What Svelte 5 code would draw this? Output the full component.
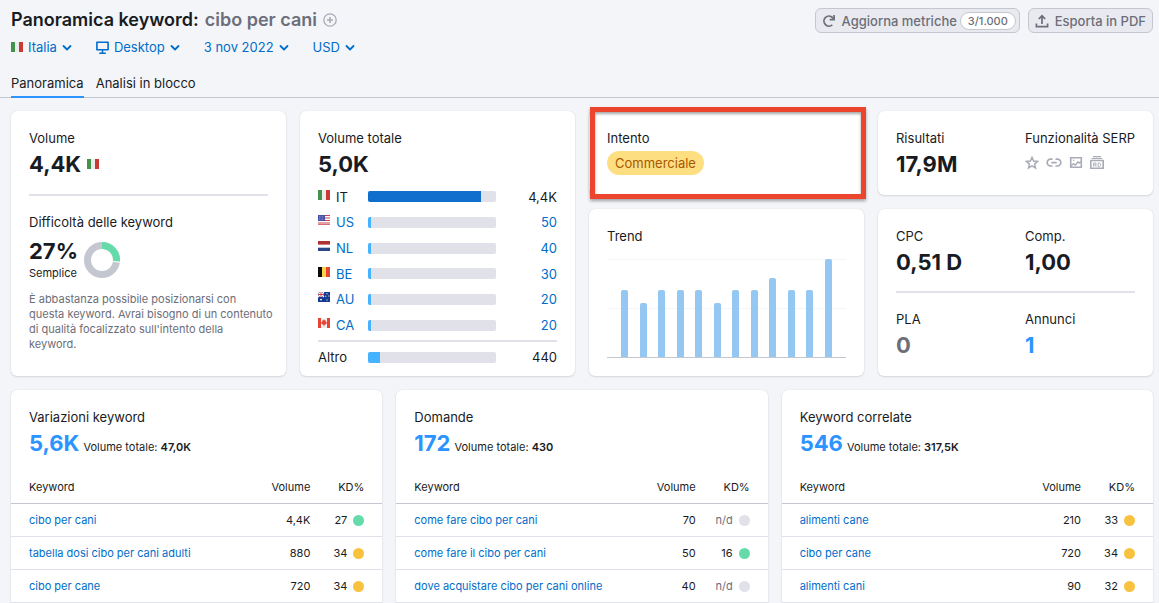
<script lang="ts">
	interface Row {
		keyword: string;
		volume: string;
		kd: string;
		level: 'easy' | 'medium' | 'none';
	}

	interface KeywordList {
		title: string;
		count: string;
		total: string;
		rows: Row[];
	}

	const filters = [
		{ label: 'Italia', icon: 'flag' },
		{ label: 'Desktop', icon: 'desktop' },
		{ label: '3 nov 2022', icon: null },
		{ label: 'USD', icon: null }
	];

	// share is a percentage of the track
	const countries = [
		{ code: 'IT', volume: '4,4K', share: 88 },
		{ code: 'US', volume: '50', share: 2 },
		{ code: 'NL', volume: '40', share: 2 },
		{ code: 'BE', volume: '30', share: 2 },
		{ code: 'AU', volume: '20', share: 2 },
		{ code: 'CA', volume: '20', share: 2 }
	];

	const trend = [68, 55, 68, 68, 68, 55, 68, 68, 81, 68, 68, 100];

	const lists: KeywordList[] = [
		{
			title: 'Variazioni keyword',
			count: '5,6K',
			total: '47,0K',
			rows: [
				{ keyword: 'cibo per cani', volume: '4,4K', kd: '27', level: 'easy' },
				{ keyword: 'tabella dosi cibo per cani adulti', volume: '880', kd: '34', level: 'medium' },
				{ keyword: 'cibo per cane', volume: '720', kd: '34', level: 'medium' }
			]
		},
		{
			title: 'Domande',
			count: '172',
			total: '430',
			rows: [
				{ keyword: 'come fare cibo per cani', volume: '70', kd: 'n/d', level: 'none' },
				{ keyword: 'come fare il cibo per cani', volume: '50', kd: '16', level: 'easy' },
				{ keyword: 'dove acquistare cibo per cani online', volume: '40', kd: 'n/d', level: 'none' }
			]
		},
		{
			title: 'Keyword correlate',
			count: '546',
			total: '317,5K',
			rows: [
				{ keyword: 'alimenti cane', volume: '210', kd: '33', level: 'medium' },
				{ keyword: 'cibo per cane', volume: '720', kd: '34', level: 'medium' },
				{ keyword: 'alimenti cani', volume: '90', kd: '32', level: 'medium' }
			]
		}
	];
</script>

{#snippet flag(code: string)}
	<svg class="flag" viewBox="0 0 12 10" width="12" height="10" aria-hidden="true">
		{#if code === 'IT'}
			<rect width="12" height="10" fill="#ececec" />
			<rect width="4" height="10" fill="#43934b" />
			<rect x="8" width="4" height="10" fill="#c93a32" />
		{:else if code === 'US'}
			<rect width="12" height="10" fill="#fff" />
			<path d="M0 .5h12M0 3h12M0 5.5h12M0 8h12M0 9.7h12" stroke="#cf3f4c" stroke-width="1.1" />
			<rect width="7" height="6" fill="#4a4fa8" />
			<path d="M1 1.5h5M1 3h5M1 4.5h5" stroke="#a9abdc" stroke-width=".6" stroke-dasharray=".8 .8" />
		{:else if code === 'NL'}
			<rect width="12" height="10" fill="#fff" />
			<rect width="12" height="3.6" fill="#ad3130" />
			<rect y="6.7" width="12" height="3.3" fill="#28478c" />
		{:else if code === 'BE'}
			<rect width="12" height="10" fill="#fad646" />
			<rect width="4" height="10" fill="#0b0b0b" />
			<rect x="8" width="4" height="10" fill="#ea4438" />
		{:else if code === 'AU'}
			<rect width="12" height="10" fill="#173a91" />
			<path d="M0 0l6 5M6 0L0 5" stroke="#fff" stroke-width="1.1" />
			<path d="M3 0v5M0 2.5h6" stroke="#fff" stroke-width="2" />
			<path d="M3 0v5M0 2.5h6" stroke="#dc3a48" stroke-width="1" />
			<circle cx="3" cy="7.6" r=".9" fill="#fff" />
			<path d="M9 1.3v1M7.3 4.3h1M10.3 4h1M9 7.5v1" stroke="#fff" stroke-width="1" />
		{:else if code === 'CA'}
			<rect width="12" height="10" fill="#f1f1f1" />
			<rect width="3" height="10" fill="#e64535" />
			<rect x="9" width="3" height="10" fill="#e64535" />
			<path d="M6 1.2l.9 1.4.9-.3-.1 1.4 1.2.2-.5 1 .4.5-2.2 1.6H6.3v1.6h-.6V7h-.3L3.2 5.4l.4-.5-.5-1 1.2-.2-.1-1.4.9.3z" fill="#e64535" />
		{/if}
	</svg>
{/snippet}

{#snippet chevron()}
	<svg class="chevron" viewBox="0 0 10 10" width="10" height="10" aria-hidden="true">
		<path d="M1.5 4l3.5 3.5L8.5 4" fill="none" stroke="currentColor" stroke-width="1.8" stroke-linecap="round" stroke-linejoin="round" />
	</svg>
{/snippet}

<div class="page">
	<header class="header">
		<div>
			<h1 class="title">
				Panoramica keyword: <span class="query">cibo per cani</span>
				<button type="button" class="add" aria-label="Aggiungi keyword">
					<svg viewBox="0 0 14 14" width="14" height="14" aria-hidden="true">
						<circle cx="7" cy="7" r="6.2" fill="none" stroke="currentColor" stroke-width="1.3" />
						<path d="M7 4v6M4 7h6" stroke="currentColor" stroke-width="1.6" />
					</svg>
				</button>
			</h1>
			<div class="filters">
				{#each filters as filter}
					<button type="button" class="filter">
						{#if filter.icon === 'flag'}
							{@render flag('IT')}
						{:else if filter.icon === 'desktop'}
							<svg viewBox="0 0 13 13" width="13" height="13" aria-hidden="true">
								<path d="M.9 1.2h11.2v7.6H.9z" fill="none" stroke="currentColor" stroke-width="1.6" stroke-linejoin="round" />
								<path d="M6.5 9v3M3.2 12.2h6.6" stroke="currentColor" stroke-width="1.5" />
							</svg>
						{/if}
						<span>{filter.label}</span>
						{@render chevron()}
					</button>
				{/each}
			</div>
		</div>
		<div class="actions">
			<button type="button" class="action">
				<svg viewBox="0 0 14 14" width="14" height="14" aria-hidden="true">
					<path d="M10.3 10.8A5 5 0 1 1 10.6 3.6L12 5" fill="none" stroke="currentColor" stroke-width="1.8" />
					<path d="M12.1 1v4.6H7.6" fill="none" stroke="currentColor" stroke-width="1.7" />
				</svg>
				Aggiorna metriche
				<span class="quota">3/1.000</span>
			</button>
			<button type="button" class="action">
				<svg viewBox="0 0 14 14" width="14" height="14" aria-hidden="true">
					<path d="M7 10V2M3.8 5L7 1.8 10.2 5" fill="none" stroke="currentColor" stroke-width="1.7" />
					<path d="M1.4 9.4v3.2h11.2V9.4" fill="none" stroke="currentColor" stroke-width="1.7" />
				</svg>
				Esporta in PDF
			</button>
		</div>
	</header>

	<nav class="tabs">
		<a href="#panoramica" class="tab active">Panoramica</a>
		<a href="#analisi" class="tab">Analisi in blocco</a>
	</nav>

	<main>
		<div class="summary">
			<section class="card">
				<h2 class="label">Volume</h2>
				<div class="value">4,4K {@render flag('IT')}</div>
				<hr />
				<h2 class="label">Difficoltà delle keyword</h2>
				<div class="difficulty">
					<div>
						<div class="value">27%</div>
						<div class="level">Semplice</div>
					</div>
					<svg viewBox="0 0 36 36" width="36" height="36" aria-hidden="true">
						<circle cx="18" cy="18" r="14.5" fill="none" stroke="#c4c7cf" stroke-width="7" />
						<path d="M18 3.5A14.5 14.5 0 0 1 32.4 20.2" fill="none" stroke="#fff" stroke-width="7" />
						<path d="M18 3.5A14.5 14.5 0 0 1 32.5 19.3" fill="none" stroke="#66dbaa" stroke-width="7" />
					</svg>
				</div>
				<p class="hint">
					È abbastanza possibile posizionarsi con<br />
					questa keyword. Avrai bisogno di un contenuto<br />
					di qualità focalizzato sull'intento della<br />
					keyword.
				</p>
			</section>

			<section class="card totals">
				<h2 class="label">Volume totale</h2>
				<div class="value">5,0K</div>
				<div class="countries">
					{#each countries as country, i}
						<div class="country">
							{@render flag(country.code)}
							{#if i === 0}
								<span>{country.code}</span>
							{:else}
								<a href="#{country.code}">{country.code}</a>
							{/if}
							<div class="track">
								<div class="fill" class:main={i === 0} style="width: {country.share}%"></div>
							</div>
							{#if i === 0}
								<span class="amount">{country.volume}</span>
							{:else}
								<a class="amount" href="#{country.code}">{country.volume}</a>
							{/if}
						</div>
					{/each}
				</div>
				<div class="country other">
					<span class="wide">Altro</span>
					<div class="track"><div class="fill" style="width: 9%"></div></div>
					<span class="amount">440</span>
				</div>
			</section>

			<div class="stack">
				<section class="card highlighted">
					<h2 class="label">Intento</h2>
					<span class="intent">Commerciale</span>
				</section>
				<section class="card trend">
					<h2 class="label">Trend</h2>
					<div class="chart">
						{#each trend as height}
							<div class="bar" style="height: {height}%"></div>
						{/each}
					</div>
				</section>
			</div>

			<div class="stack">
				<section class="card pair">
					<div>
						<h2 class="label">Risultati</h2>
						<div class="value">17,9M</div>
					</div>
					<div>
						<h2 class="label">Funzionalità SERP</h2>
						<div class="features">
							<svg viewBox="0 0 14 14" width="14" height="14" aria-hidden="true">
								<path d="M7 1.4l1.6 3.7 4 .3-3 2.7.9 3.9L7 9.9 3.5 12l.9-3.9-3-2.7 4-.3z" fill="none" stroke="currentColor" stroke-width="1.5" />
							</svg>
							<svg viewBox="0 0 16 14" width="16" height="14" aria-hidden="true">
								<path d="M6.5 3.2H4.6a3.4 3.4 0 0 0 0 6.8h1.9M9.5 3.2h1.9a3.4 3.4 0 0 1 0 6.8H9.5M5.3 6.6h5.4" fill="none" stroke="currentColor" stroke-width="1.7" />
							</svg>
							<svg viewBox="0 0 14 14" width="14" height="14" aria-hidden="true">
								<path d="M1.7 1.7h10.6v9.6H1.7z" fill="none" stroke="currentColor" stroke-width="1.6" />
								<path d="M2 10l2.5-2.4 1.8 1.7L9 5.8l1.2 1.2L12 5.5" fill="none" stroke="currentColor" stroke-width="1.4" />
								<circle cx="4.6" cy="4.3" r=".8" fill="currentColor" />
							</svg>
							<svg viewBox="0 0 14 14" width="14" height="14" aria-hidden="true">
								<path d="M3 .7h8M1.8 2.5h10.4" stroke="currentColor" stroke-width="1.2" />
								<path d="M.8 4.5h12.4v7.8H.8z" fill="none" stroke="currentColor" stroke-width="1.6" />
								<path d="M3.6 10.6V7h2.3v3.6M3.6 9h2.3M8 7h1.6l1 1v1.4l-1 1H8z" fill="none" stroke="currentColor" stroke-width=".9" />
							</svg>
						</div>
					</div>
				</section>
				<section class="card costs">
					<div class="pair">
						<div>
							<h2 class="label">CPC</h2>
							<div class="value">0,51 D</div>
						</div>
						<div>
							<h2 class="label">Comp.</h2>
							<div class="value">1,00</div>
						</div>
					</div>
					<hr />
					<div class="pair">
						<div>
							<h2 class="label">PLA</h2>
							<div class="value muted">0</div>
						</div>
						<div>
							<h2 class="label">Annunci</h2>
							<a class="value count" href="#annunci">1</a>
						</div>
					</div>
				</section>
			</div>
		</div>

		<div class="lists">
			{#each lists as list}
				<section class="card list">
					<div class="list-head">
						<h2 class="label">{list.title}</h2>
						<a class="value count" href="#lista">{list.count}</a>
						<span class="total">Volume totale: <strong>{list.total}</strong></span>
					</div>
					<table>
						<thead>
							<tr>
								<th scope="col">Keyword</th>
								<th scope="col" class="volume">Volume</th>
								<th scope="col" class="kd">KD%</th>
							</tr>
						</thead>
						<tbody>
							{#each list.rows as row}
								<tr>
									<td><a href="#keyword">{row.keyword}</a></td>
									<td class="volume">{row.volume}</td>
									<td class="kd">
										<span class="score" class:muted={row.level === 'none'}>
											{row.kd}<span class="dot {row.level}"></span>
										</span>
									</td>
								</tr>
							{/each}
						</tbody>
					</table>
				</section>
			{/each}
		</div>
	</main>
</div>

<style>
	:global(html) {
		scrollbar-width: none;
	}

	:global(body) {
		margin: 0;
		background: #f4f5f9;
	}

	.page {
		font-family: Inter, 'Liberation Sans', sans-serif;
		font-size: 13px;
		line-height: 18px;
		color: #191b23;
	}

	h1,
	h2,
	p {
		margin: 0;
		font-weight: 400;
	}

	a {
		color: #006dca;
		text-decoration: none;
	}

	button {
		font: inherit;
		cursor: pointer;
	}

	svg {
		display: block;
		flex: none;
	}

	hr {
		height: 2px;
		margin: 0;
		border: none;
		background: #e0e1e9;
	}

	.header {
		display: flex;
		justify-content: space-between;
		align-items: flex-start;
		padding: 8px 6px 0 11px;
	}

	.title {
		display: flex;
		align-items: center;
		gap: 6px;
		font-size: 18px;
		font-weight: 600;
		line-height: 24px;
	}

	.query {
		color: #6c6e79;
	}

	.add {
		padding: 0;
		border: none;
		background: none;
		color: #a9abb6;
	}

	.filters {
		display: flex;
		gap: 24px;
		margin-top: 6px;
	}

	.filter {
		display: flex;
		align-items: center;
		gap: 5px;
		padding: 0;
		border: none;
		background: none;
		color: #006dca;
	}

	.actions {
		display: flex;
		gap: 8px;
	}

	.action {
		display: flex;
		align-items: center;
		gap: 6px;
		height: 25px;
		padding: 0 6px;
		border: 1px solid #c4c7cf;
		border-radius: 6px;
		background: #e9eaf0;
		font-weight: 500;
		line-height: 16px;
		color: #6c6e79;
	}

	.quota {
		margin: 0 -3px;
		padding: 0 7px;
		border: 1px solid #c4c7cf;
		border-radius: 9px;
		background: #fff;
		font-size: 11px;
		line-height: 16px;
	}

	.tabs {
		display: flex;
		gap: 12px;
		margin-top: 18px;
		padding-left: 11px;
		border-bottom: 1px solid #c4c7cf;
	}

	.tab {
		margin-bottom: -1px;
		padding-bottom: 4px;
		border-bottom: 2px solid transparent;
		color: #191b23;
	}

	.tab.active {
		border-color: #2b94ff;
	}

	main {
		display: grid;
		gap: 14px;
		padding: 13px 6px 0 11px;
	}

	.summary,
	.lists {
		display: grid;
		grid-template-columns: repeat(4, minmax(0, 1fr));
		gap: 14px;
	}

	.lists {
		grid-template-columns: repeat(3, minmax(0, 1fr));
	}

	.stack {
		display: flex;
		flex-direction: column;
		gap: 14px;
	}

	.card {
		padding: 18px;
		border-radius: 6px;
		background: #fff;
		box-shadow:
			0 0 1px rgba(25, 27, 35, 0.16),
			0 1px 2px rgba(25, 27, 35, 0.12);
	}

	.label {
		font-size: 13px;
		line-height: 18px;
		white-space: nowrap;
	}

	.value {
		display: flex;
		align-items: center;
		gap: 6px;
		margin-top: 4px;
		font-size: 22px;
		font-weight: 700;
		line-height: 26px;
	}

	.card > hr {
		margin: 17px 0;
	}

	.costs > hr {
		margin-top: 16px;
	}

	.muted {
		color: #6c6e79;
	}

	.count {
		color: #2b94ff;
	}

	.difficulty {
		display: flex;
		align-items: center;
		gap: 6px;
		margin-top: 7px;
	}

	.difficulty .value {
		margin: 0;
	}

	.level {
		font-size: 11px;
	}

	.hint {
		margin-top: 10px;
		font-size: 11px;
		line-height: 15px;
		white-space: nowrap;
		color: #6c6e79;
	}

	.totals {
		display: flex;
		flex-direction: column;
		padding-bottom: 10px;
	}

	.countries {
		display: grid;
		flex: 1;
		grid-auto-rows: 1fr;
		margin-top: 7px;
		padding-bottom: 2px;
		border-bottom: 2px solid #e0e1e9;
	}

	.country {
		display: grid;
		grid-template-columns: 12px 26px minmax(0, 1fr) 55px;
		column-gap: 6px;
		align-items: center;
	}

	.country .flag {
		margin-bottom: 4px;
	}

	.other {
		padding-top: 6px;
	}

	.wide {
		grid-column: span 2;
	}

	.track {
		height: 11px;
		border-radius: 2px;
		background: #e0e1e9;
		overflow: hidden;
	}

	.fill {
		height: 100%;
		background: #45b3ff;
	}

	.fill.main {
		background: #106ecd;
	}

	.amount {
		text-align: right;
	}

	.highlighted {
		position: relative;
		min-height: 48px;
	}

	/* Callout frame drawn over the card edges */
	.highlighted::after {
		content: '';
		position: absolute;
		inset: -4px -2px -4px 1px;
		border: 5px solid #ed452d;
		box-shadow:
			0 2px 3px rgba(0, 0, 0, 0.35),
			inset 0 2px 3px rgba(0, 0, 0, 0.35);
	}

	.intent {
		display: inline-block;
		margin-top: 4px;
		padding: 0 8px;
		border-radius: 12px;
		background: #fddf82;
		line-height: 24px;
		color: #a75800;
	}

	.trend,
	.costs {
		flex: 1;
	}

	.trend {
		display: flex;
		flex-direction: column;
	}

	.chart {
		display: flex;
		flex: 1;
		justify-content: space-between;
		align-items: flex-end;
		margin-top: 14px;
		padding: 0 14px;
		border-bottom: 1px solid #c4c7cf;
		background:
			linear-gradient(#f4f5f9, #f4f5f9) 0 0 / 100% 1px no-repeat,
			linear-gradient(#f4f5f9, #f4f5f9) 0 50% / 100% 1px no-repeat;
	}

	.bar {
		width: 7px;
		border-radius: 2px 2px 0 0;
		background: #94c7f1;
	}

	.pair {
		display: grid;
		grid-template-columns: minmax(0, 1fr) 110px;
	}

	.features {
		display: flex;
		gap: 7px;
		margin-top: 9px;
		color: #a9abb6;
	}

	.list {
		padding: 18px 0;
	}

	.list-head {
		display: flex;
		flex-wrap: wrap;
		align-items: baseline;
		column-gap: 4px;
		padding: 0 18px;
	}

	.list-head .label {
		flex-basis: 100%;
	}

	.total {
		font-size: 11px;
	}

	.total strong {
		font-weight: 600;
	}

	table {
		width: 100%;
		margin-top: 15px;
		border-collapse: collapse;
		table-layout: fixed;
		font-size: 11px;
		line-height: 16px;
	}

	th,
	td {
		padding: 8px 0;
		text-align: left;
		font-weight: 400;
		border-bottom: 1px solid #e0e1e9;
	}

	th {
		border-bottom: 1px solid #c4c7cf;
	}

	th:first-child,
	td:first-child {
		padding-left: 18px;
	}

	.volume {
		width: 50px;
		text-align: right;
	}

	.kd {
		width: 54px;
		padding-right: 18px;
		text-align: right;
	}

	.score {
		display: flex;
		justify-content: flex-end;
		align-items: center;
		gap: 6px;
	}

	.dot {
		width: 11px;
		height: 11px;
		border-radius: 50%;
		background: #e0e1e9;
	}

	.dot.easy {
		background: #66dbaa;
	}

	.dot.medium {
		background: #f8c23f;
	}
</style>
